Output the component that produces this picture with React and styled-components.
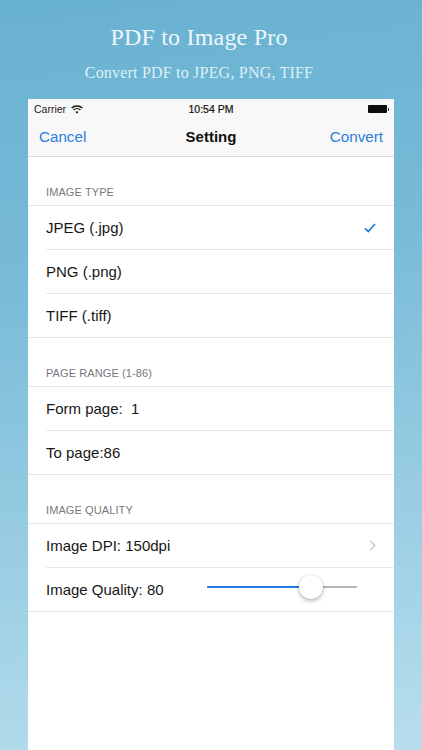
import React from "react";
import styled, { createGlobalStyle } from "styled-components";

const Global = createGlobalStyle`
  html, body { margin: 0; padding: 0; width: 422px; height: 750px; overflow: hidden; }
  body { font-family: "Liberation Sans", Arial, sans-serif; }
`;
const Page = styled.div`
  width: 422px; height: 750px; overflow: hidden; display: flex; flex-direction: column;
  background: linear-gradient(172deg, #69b1d1 0%, #78bbd8 35%, #b8deed 100%);
`;
const Hero = styled.header`
  height: 99px; flex: none; box-sizing: border-box; padding: 22px 24px 0 0;
  display: flex; flex-direction: column; align-items: center;
  font-family: "Liberation Serif", "Times New Roman", serif; color: #eef7fb;
`;
const Title = styled.h1`
  margin: 0; font-size: 24px; line-height: 30px; font-weight: 400; letter-spacing: 0.2px;
`;
const Subtitle = styled.p`
  margin: 11px 0 0; font-size: 16px; line-height: 20px; color: #dff0f7; letter-spacing: 0.2px;
`;
const Phone = styled.main`
  flex: 1; margin: 0 28px; background: #fff; display: flex; flex-direction: column;
`;
const Bars = styled.div`
  background: #f8f8f8; border-bottom: 1px solid #dcdcde; height: 57px; flex: none;
`;
const StatusBar = styled.div`
  height: 20px; display: grid; grid-template-columns: 1fr auto 1fr; align-items: center;
  padding: 0 6px; font-size: 10.5px; color: #222;
`;
const Carrier = styled.span` display: flex; align-items: center; gap: 5px; `;
const Clock = styled.span` font-size: 10.5px; color: #111; -webkit-text-stroke: 0.2px #111; `;
const Battery = styled.span`
  justify-self: end; display: block; position: relative; width: 19px; height: 8px;
  background: #0c0c0c; border-radius: 1px; margin-right: 1px;
  &::after { content: ""; position: absolute; right: -2px; top: 2.5px; width: 1.5px; height: 3px; background: #333; }
`;
const NavBar = styled.nav`
  height: 36px; box-sizing: border-box; padding: 0 11px 2px;
  display: grid; grid-template-columns: 1fr auto 1fr; align-items: center;
  font-size: 15.2px;
`;
const NavButton = styled.span`
  color: #2a7fe0; justify-self: ${p => (p.$end ? "end" : "start")};
`;
const NavTitle = styled.span` font-weight: 700; font-size: 15px; color: #111; `;
const SectionLabel = styled.div`
  height: 48px; box-sizing: border-box; flex: none;
  padding: 0 0 6px 18px; display: flex; align-items: flex-end;
  font-size: 11px; line-height: 13px; color: #77777c; letter-spacing: 0.1px;
`;
const List = styled.div`
  border-top: 1px solid #e6e6e8; border-bottom: 1px solid #e6e6e8; flex: none;
`;
const Row = styled.div`
  height: 44px; box-sizing: border-box; margin-left: 18px; padding-right: 18px;
  display: flex; align-items: center; justify-content: space-between;
  font-size: 15px; color: #161616; border-bottom: 1px solid #e8e8ea;
  &:last-child { height: 43px; border-bottom: 0; }
`;
const SliderTrack = styled.div`
  position: relative; width: 150px; height: 2px; margin: 0 19px 5px 0; background: #b5b5b5;
  border-radius: 1px;
`;
const SliderFill = styled.div` height: 100%; background: #1f7ae0; border-radius: 1px; `;
const SliderThumb = styled.div`
  position: absolute; top: -11px; margin-left: -12px; width: 24px; height: 24px; border-radius: 50%;
  background: #fff; box-shadow: 0 2px 4px rgba(0,0,0,.28), 0 0 1px rgba(0,0,0,.2);
`;

const Wifi = () => (
  <svg width="12" height="9" viewBox="0 0 12 9" fill="none" stroke="#111" strokeWidth="1.4">
    <path d="M.7 3.1a7.6 7.6 0 0 1 10.6 0" />
    <path d="M2.6 5a4.9 4.9 0 0 1 6.8 0" />
    <path d="M6 8.6 4.5 6.9a2.2 2.2 0 0 1 3 0Z" fill="#111" stroke="none" />
  </svg>
);
const Check = () => (
  <svg width="12" height="10" viewBox="0 0 12 10" fill="none" stroke="#1f78de" strokeWidth="1.7">
    <path d="M1 5.4 4.2 8.6 11 1" />
  </svg>
);
const Chevron = () => (
  <svg width="7" height="11" viewBox="0 0 7 11" fill="none" stroke="#c6c6cb" strokeWidth="1.3">
    <path d="M1 .6 6 5.5 1 10.4" />
  </svg>
);

const pct = 69.5;

export default function App() {
  return (
    <Page>
      <Global />
      <Hero>
        <Title>PDF to Image Pro</Title>
        <Subtitle>Convert PDF to JPEG, PNG, TIFF</Subtitle>
      </Hero>
      <Phone>
        <Bars>
          <StatusBar>
            <Carrier>Carrier <Wifi /></Carrier>
            <Clock>10:54 PM</Clock>
            <Battery />
          </StatusBar>
          <NavBar>
            <NavButton>Cancel</NavButton>
            <NavTitle>Setting</NavTitle>
            <NavButton $end>Convert</NavButton>
          </NavBar>
        </Bars>
        <SectionLabel>IMAGE TYPE</SectionLabel>
        <List>
          <Row>JPEG (.jpg)<Check /></Row>
          <Row>PNG (.png)</Row>
          <Row>TIFF (.tiff)</Row>
        </List>
        <SectionLabel>PAGE RANGE (1-86)</SectionLabel>
        <List>
          <Row>Form page:&nbsp; 1</Row>
          <Row>To page:86</Row>
        </List>
        <SectionLabel>IMAGE QUALITY</SectionLabel>
        <List>
          <Row>Image DPI: 150dpi<Chevron /></Row>
          <Row>
            Image Quality: 80
            <SliderTrack>
              <SliderFill style={{ width: `${pct}%` }} />
              <SliderThumb style={{ left: `${pct}%` }} />
            </SliderTrack>
          </Row>
        </List>
      </Phone>
    </Page>
  );
}
